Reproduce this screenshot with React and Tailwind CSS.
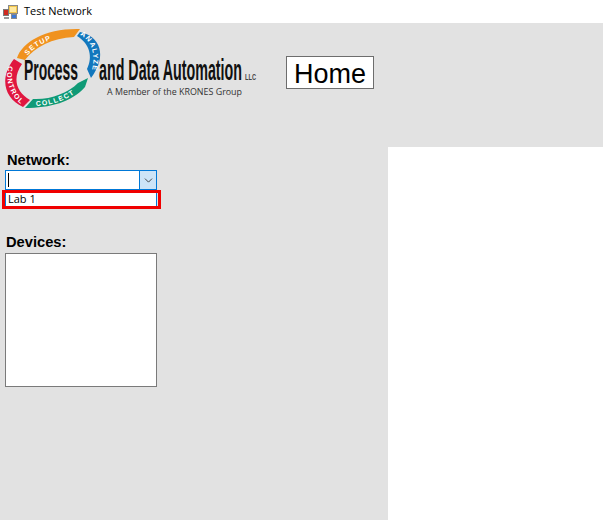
import React from "react";
import { ChevronDown } from "lucide-react";

// ── Sub-components ──────────────────────────────────────────

function WindowIcon() {
  return (
    <svg width="16" height="16" viewBox="0 0 16 16" className="ml-[3px] shrink-0">
      <rect x="5.5" y="1.5" width="9" height="8" fill="#f3c64a" stroke="#8a8a8a" />
      <rect x="7" y="3" width="6" height="5" fill="#ffe9a0" />
      <rect x="0.5" y="5.5" width="5" height="6" fill="#d02a20" stroke="#7a7a7a" />
      <rect x="8.5" y="10.5" width="5" height="4" fill="#3b78d8" stroke="#8a8a8a" />
      <rect x="1" y="13" width="5" height="2" fill="#9a9a9a" />
    </svg>
  );
}

function Logo() {
  const label = { fontFamily: "Liberation Sans", fontWeight: 700, fontSize: 7, fill: "#fff", letterSpacing: 1.2 };
  const word = { fontFamily: "Liberation Sans", fontWeight: 700, fontSize: 29, fill: "#111" };
  return (
    <svg width="258" height="90" viewBox="0 26 258 90" className="shrink-0">
      <defs>
        <path id="arc-setup" d="M 26 58 C 34 45 52 37 76 35" />
        <path id="arc-analyze" d="M 80 35 C 92 41 98 56 89 80" />
        <path id="arc-collect" d="M 34 106 C 55 106 74 97 86 84" />
        <path id="arc-control" d="M 8 66 C 5 80 9 95 23 106" />
      </defs>
      <path d="M 17 58 C 22 42 46 28 80 29 L 74 37 C 52 38 35 47 25 60 Z" fill="#f0921e" />
      <path d="M 77 36 L 80 32 C 100 36 108 56 91 78 L 87 69 C 93 57 90 44 77 36 Z" fill="#1277bd" />
      <path d="M 88 78 L 85 87 C 72 102 50 108 25 108 L 33 99 C 50 100 68 93 78 83 Z" fill="#0f9a76" />
      <path d="M 14 59 L 22 64 C 12 78 16 92 30 100 L 23 107 C 4 98 -1 78 14 59 Z" fill="#e0173f" />
      <text style={label}><textPath href="#arc-setup" startOffset="3">SETUP</textPath></text>
      <text style={label}><textPath href="#arc-analyze" startOffset="0">ANALYZE</textPath></text>
      <text style={label}><textPath href="#arc-collect" startOffset="2">COLLECT</textPath></text>
      <text style={label}><textPath href="#arc-control" startOffset="0">CONTROL</textPath></text>
      <text x="24" y="80" textLength="54" lengthAdjust="spacingAndGlyphs" style={word}>Process</text>
      <text x="99" y="80" textLength="143" lengthAdjust="spacingAndGlyphs" style={word}>and Data Automation</text>
      <text x="245" y="80" textLength="11" lengthAdjust="spacingAndGlyphs" style={{ fontFamily: "Liberation Sans", fontWeight: 700, fontSize: 9, fill: "#444" }}>LLC</text>
      <text x="107" y="95" textLength="135" lengthAdjust="spacingAndGlyphs" style={{ fontFamily: "Open Sans", fontSize: 9, fill: "#333" }}>A Member of the KRONES Group</text>
    </svg>
  );
}

function NetworkPicker() {
  return (
    <div className="relative ml-[5px] w-[152px]">
      <div className="flex h-5 border border-[#0078d7] bg-white">
        <div className="flex-1 pl-[2px] pt-[2px]">
          <div className="h-[14px] w-px bg-black" />
        </div>
        <div className="flex w-[17px] items-center justify-center border-l border-[#0078d7] bg-[#cce4f7]">
          <ChevronDown size={13} strokeWidth={1.5} color="#222" />
        </div>
      </div>
      <div className="h-[18px] border border-[#0078d7] bg-white pl-[2px] font-['Open_Sans',sans-serif] text-[11px] leading-[16px] text-black">Lab 1</div>
      <div className="pointer-events-none absolute left-[-3px] top-[20px] h-[19px] w-[159px] border-[3px] border-[#f00000]" />
    </div>
  );
}

// ── Main Page ───────────────────────────────────────────────

export default function App() {
  return (
    <div className="flex h-[520px] w-[603px] flex-col overflow-hidden bg-[#e2e2e2] font-['Liberation_Sans',sans-serif]">
      <div className="flex h-[23px] items-center gap-[5px] bg-white font-['Open_Sans',sans-serif] text-[11px] text-black">
        <WindowIcon />
        <span>Test Network</span>
      </div>

      <header className="flex h-[124px] items-start">
        <div className="pt-[3px]">
          <Logo />
        </div>
        <button className="ml-[28px] mt-[33px] flex h-[33px] w-[88px] items-center justify-center border border-[#6d6d6d] bg-white pt-[3px] text-[27px] text-black">
          Home
        </button>
      </header>

      <div className="flex flex-1">
        <div className="w-[388px]">
          <h2 className="ml-[7px] mt-[4px] text-[14.7px] font-bold leading-[18px] text-black">Network:</h2>
          <div className="mt-[1px]">
            <NetworkPicker />
          </div>
          <h2 className="ml-[6px] mt-[25px] text-[14.7px] font-bold leading-[18px] text-black">Devices:</h2>
          <div className="ml-[5px] mt-[2px] h-[134px] w-[152px] border border-[#7a7a7a] bg-white" />
        </div>
        <div className="flex-1 bg-white" />
      </div>
    </div>
  );
}
